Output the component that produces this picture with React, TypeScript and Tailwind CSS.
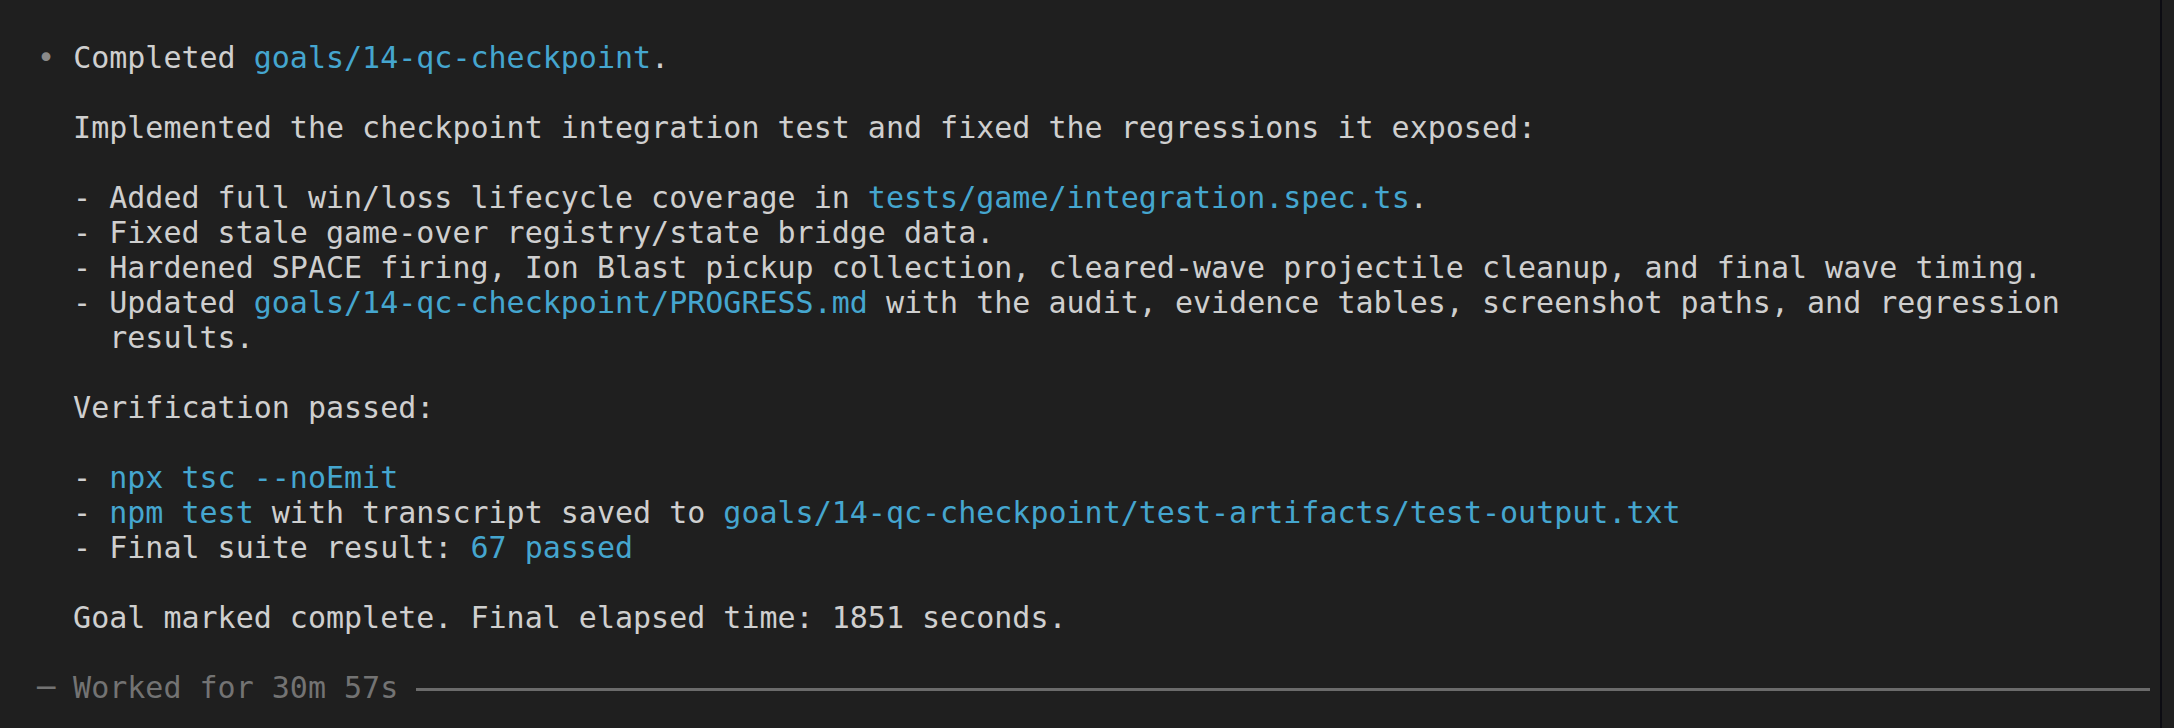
type Seg = { t: string; c?: 'link' }

const lines: Seg[][] = [
  [{ t: 'Completed ' }, { t: 'goals/14-qc-checkpoint', c: 'link' }, { t: '.' }],
  [],
  [{ t: '  Implemented the checkpoint integration test and fixed the regressions it exposed:' }],
  [],
  [{ t: '  - Added full win/loss lifecycle coverage in ' }, { t: 'tests/game/integration.spec.ts', c: 'link' }, { t: '.' }],
  [{ t: '  - Fixed stale game-over registry/state bridge data.' }],
  [{ t: '  - Hardened SPACE firing, Ion Blast pickup collection, cleared-wave projectile cleanup, and final wave timing.' }],
  [
    { t: '  - Updated ' },
    { t: 'goals/14-qc-checkpoint/PROGRESS.md', c: 'link' },
    { t: ' with the audit, evidence tables, screenshot paths, and regression' },
  ],
  [{ t: '    results.' }],
  [],
  [{ t: '  Verification passed:' }],
  [],
  [{ t: '  - ' }, { t: 'npx tsc --noEmit', c: 'link' }],
  [
    { t: '  - ' },
    { t: 'npm test', c: 'link' },
    { t: ' with transcript saved to ' },
    { t: 'goals/14-qc-checkpoint/test-artifacts/test-output.txt', c: 'link' },
  ],
  [{ t: '  - Final suite result: ' }, { t: '67 passed', c: 'link' }],
  [],
  [{ t: '  Goal marked complete. Final elapsed time: 1851 seconds.' }],
  [],
]

export default function App() {
    return (
        <div className="flex h-[728px] w-full overflow-hidden bg-[#1f1f1f]">
            <div className="flex-1 min-w-0 pl-[37px] pt-[40px] font-['DejaVu_Sans_Mono','Liberation_Mono',monospace] text-[30px] leading-[35px] text-[#cfcfcf] whitespace-pre">
                {lines.map((segs, i) => (
                    <div key={i} className="h-[35px]">
                        {i === 0 && <span className="text-[#8a8a8a]">• </span>}
                        {segs.map((s, j) => (
                            <span key={j} className={s.c === 'link' ? 'text-[#45a6cf]' : ''}>
                                {s.t}
                            </span>
                        ))}
                    </div>
                ))}

                {/* worked-for divider */}
                <div className="flex h-[35px] w-[2113px] items-center text-[#737373]">
                    <span>─ Worked for 30m 57s </span>
                    <div className="mt-[3px] h-[3px] flex-1 bg-[#6b6b6b]" />
                </div>
            </div>
            <div className="w-[2px] bg-[#0c0c12]" />
            <div className="w-[12px]" />
        </div>
    )
}
